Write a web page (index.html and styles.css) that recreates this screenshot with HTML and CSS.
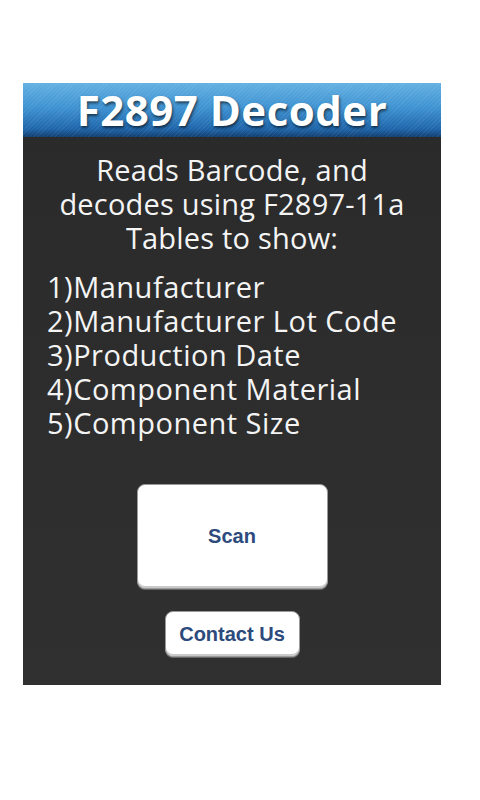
FILE: index.html
```html
<!DOCTYPE html>
<html lang="en">
<head>
  <meta charset="UTF-8">
  <meta name="viewport" content="width=device-width, initial-scale=1.0">
  <title>F2897 Decoder</title>
  <link rel="stylesheet" href="styles.css">
</head>
<body>

  <div class="screen">
    <div class="header">
      <h1>F2897 Decoder</h1>
    </div>

    <p class="intro">Reads Barcode, and<br>decodes using F2897-11a<br>Tables to show:</p>

    <ul class="fields">
      <li>1)Manufacturer</li>
      <li>2)Manufacturer Lot Code</li>
      <li>3)Production Date</li>
      <li>4)Component Material</li>
      <li>5)Component Size</li>
    </ul>

    <div class="actions">
      <button class="btn scan">Scan</button>
      <button class="btn contact">Contact Us</button>
    </div>
  </div>

</body>
</html>
```

FILE: styles.css
```css
body {
  margin: 0;
  padding: 83px 39px 0 23px;
  background: #ffffff;
  font-family: 'Open Sans', 'Noto Sans', sans-serif;
}
.screen {
  width: 418px;
  height: 602px;
  background: linear-gradient(180deg, #2a2a2a, #303030);
  color: #f4f4f4;
  display: flex;
  flex-direction: column;
}
.header {
  height: 54px;
  background:
    repeating-linear-gradient(135deg, rgba(255, 255, 255, 0.06) 0 1px, transparent 1px 3px),
    linear-gradient(180deg, #64b1e2 0%, #3f93d2 45%, #1f66ab 85%, #123f70 100%);
  display: flex;
  align-items: center;
  justify-content: center;
}
h1 {
  margin: 0;
  font-family: 'Open Sans', sans-serif;
  font-size: 42px;
  line-height: 54px;
  font-weight: bold;
  letter-spacing: 0.5px;
  color: #ffffff;
  text-shadow: 1px 2px 3px rgba(0, 0, 0, 0.6);
}
.intro {
  margin: 16px 0 0;
  font-size: 29px;
  line-height: 34px;
  letter-spacing: 0.2px;
  text-align: center;
}
.fields {
  list-style: none;
  margin: 15px 0 0;
  padding: 0 0 0 24px;
  font-size: 29px;
  line-height: 34px;
  letter-spacing: 0.5px;
}
.actions {
  margin-top: 44px;
  display: flex;
  flex-direction: column;
  align-items: center;
  gap: 22px;
}
.btn {
  background: #ffffff;
  border: 1px solid #9a9a9a;
  border-radius: 8px;
  box-shadow: inset 0 -2px 0 #c9c9c9, 0 1px 0 #666;
  font-family: 'Liberation Sans', Arial, sans-serif;
  font-weight: bold;
  font-size: 20px;
  color: #2c4a7c;
}
.scan {
  width: 191px;
  height: 105px;
}
.contact {
  width: 135px;
  height: 46px;
}
```
